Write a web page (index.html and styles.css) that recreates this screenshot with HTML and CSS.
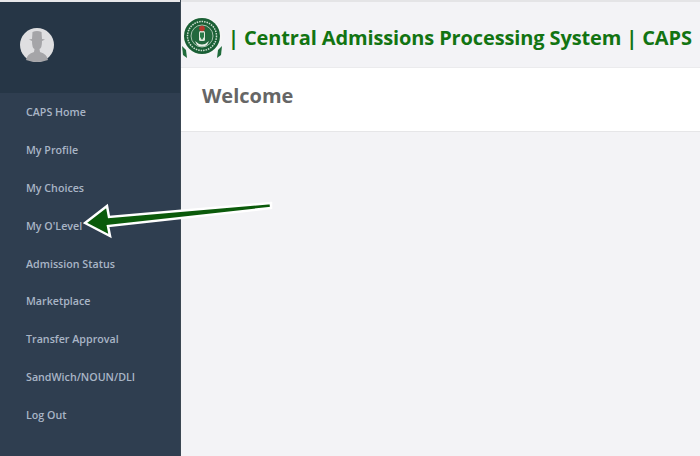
FILE: index.html
```html
<!DOCTYPE html>
<html lang="en">
<head>
    <meta charset="UTF-8">
    <meta name="viewport" content="width=device-width, initial-scale=1.0">
    <title>CAPS</title>
    <link rel="stylesheet" href="styles.css">
</head>
<body>
    <div class="page">
        <aside class="sidebar">
            <div class="profile">
                <div class="avatar">
                    <svg viewBox="0 0 34 34" width="34" height="34">
                        <circle cx="17" cy="17" r="17" fill="#dfdfe1"/>
                        <path d="M9 11.500 L12 11 L12.500 4 Q17 2 21.500 4 L22 11 L25 11.500 L22 13 Q22 20 19.500 21 L20 24 Q27 26 28 32 Q17 36 6 32 Q7 26 14 24 L14.500 21 Q12 20 12 13 Z" fill="#a5a5a8"/>
                    </svg>
                </div>
            </div>
            <ul class="menu">
                <li>CAPS Home</li>
                <li>My Profile</li>
                <li>My Choices</li>
                <li>My O'Level</li>
                <li>Admission Status</li>
                <li>Marketplace</li>
                <li>Transfer Approval</li>
                <li>SandWich/NOUN/DLI</li>
                <li>Log Out</li>
            </ul>
        </aside>
        <main class="content">
            <header class="topbar">
                <svg class="logo" viewBox="0 0 40 44" width="40" height="44">
                    <path d="M0 29 L4 33 L5 41 L1 38 Z" fill="#1f6b3a"/>
                    <path d="M40 29 L36 33 L35 41 L39 38 Z" fill="#1f6b3a"/>
                    <circle cx="20" cy="20" r="20" fill="#f6f6f6"/>
                    <circle cx="20" cy="19" r="18" fill="#1a5f35"/>
                    <circle cx="20" cy="19" r="14.500" fill="none" stroke="#cfe0d2" stroke-width="1.500" stroke-dasharray="1.500 1"/>
                    <circle cx="20" cy="19" r="11" fill="#22683d"/>
                    <circle cx="20" cy="19" r="11" fill="none" stroke="#c9d9cc" stroke-width="0.800"/>
                    <path d="M13 24 Q20 31 27 24 L25 28 Q20 31 15 28 Z" fill="#e8efe6"/>
                    <rect x="17" y="14" width="6" height="10" rx="1.500" fill="#dfe8dc"/>
                    <path d="M18 15.500 L22 15.500 L22 20 L20 23 L18 20 Z" fill="#2a7a48"/>
                    <circle cx="20" cy="11.500" r="2.800" fill="#b5372c"/>
                </svg>
                <h1 class="site-title">| Central Admissions Processing System | CAPS</h1>
            </header>
            <section class="welcome">
                <h2>Welcome</h2>
            </section>
        </main>
        <svg class="arrow" viewBox="0 0 200 45" width="200" height="45">
            <path d="M188 6 L26 20 L24 9 L2 26 L27 39 L25 29 L188 11 Z" fill="#0b5a0b" stroke="#fff" stroke-width="2.500"/>
        </svg>
    </div>
</body>
</html>
```

FILE: styles.css
```css
* {
    padding: 0;
    margin: 0;
    box-sizing: border-box;
}

body {
    width: 700px;
    height: 456px;
    overflow: hidden;
    background-color: #f3f3f6;
    font-family: "Open Sans", sans-serif;
}

.page {
    position: relative;
    display: flex;
    height: 456px;
}

.sidebar {
    width: 181px;
    flex-shrink: 0;
    background-color: #2f3e50;
    border-right: 1px solid #3a4652;
}

.profile {
    height: 93px;
    padding: 26px 0 0 20px;
    background-color: #263646;
    border-top: 2px solid #e8e8ea;
}

.avatar {
    width: 34px;
    height: 34px;
}

.avatar svg {
    display: block;
}

.menu {
    list-style: none;
    padding-top: 1px;
}

.menu li {
    height: 37.900px;
    line-height: 37.900px;
    padding-left: 26px;
    font-size: 10.700px;
    font-weight: 600;
    color: #a9b5c6;
}

.content {
    flex: 1;
    min-width: 0;
}

.topbar {
    height: 68px;
    display: flex;
    align-items: center;
    gap: 6px;
    padding: 9px 0 0 1px;
    border-top: 2px solid #e4e4e6;
    border-bottom: 1px solid #ebebed;
}

.logo {
    flex-shrink: 0;
}

.site-title {
    font-size: 20px;
    font-weight: 700;
    letter-spacing: -0.130px;
    color: #127412;
    white-space: nowrap;
    margin-top: -4px;
}

.welcome {
    height: 64px;
    padding: 14px 0 0 21px;
    background-color: #fff;
    border-bottom: 1px solid #e6e6e8;
}

.welcome h2 {
    font-size: 20px;
    font-weight: 700;
    color: #666;
}

.arrow {
    position: absolute;
    left: 83px;
    top: 197px;
}
```
